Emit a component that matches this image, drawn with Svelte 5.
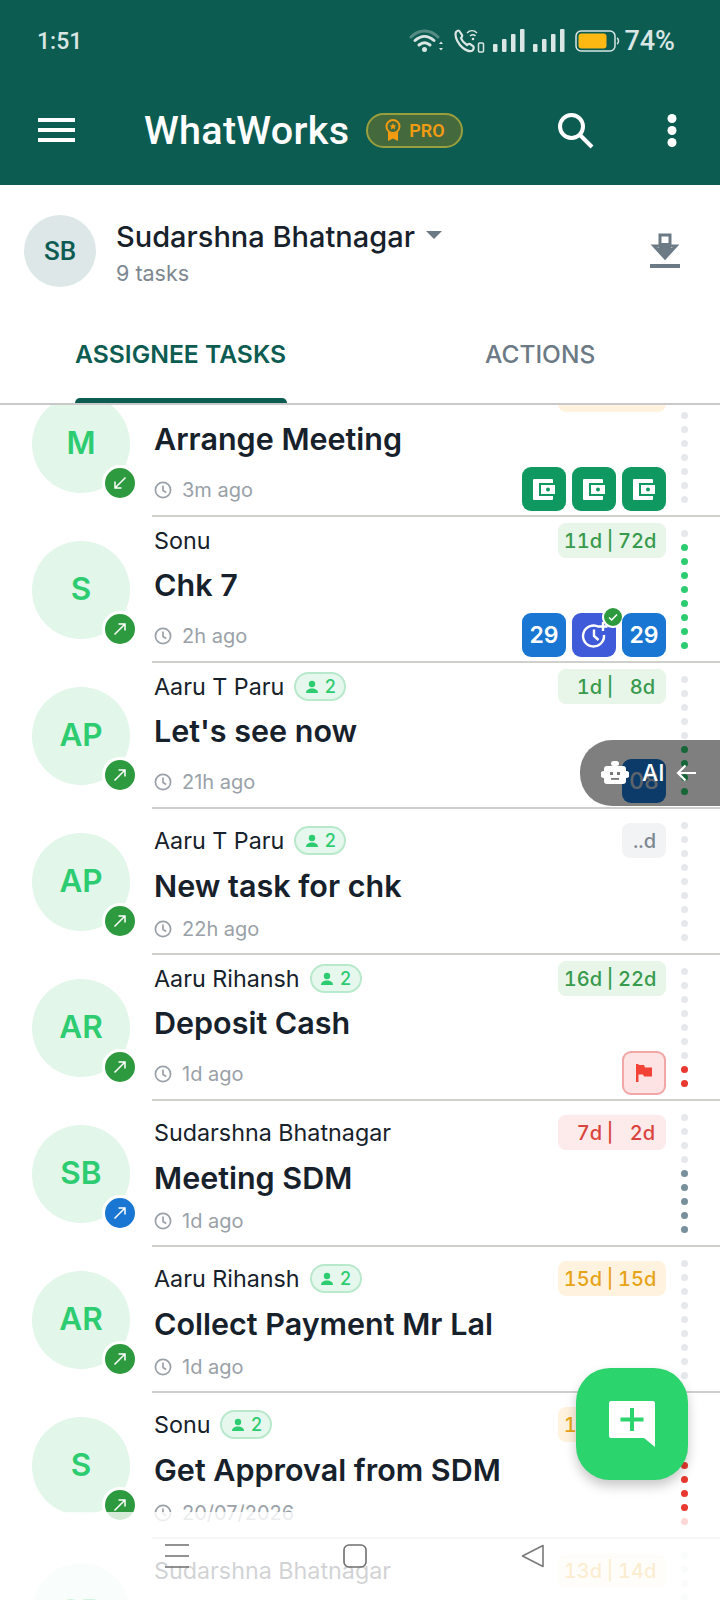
<script>
  const rows = [
    { ini: 'M', name: '', title: 'Arrange Meeting', time: '3m ago', dir: 'in', a: '', b: '', tone: 'orange', badges: ['wallet', 'wallet', 'wallet'], dots: [0, 0, ''] },
    { ini: 'S', name: 'Sonu', title: 'Chk 7', time: '2h ago', dir: 'out', a: '11d', b: '72d', tone: 'green', badges: ['29', 'alarm', '29'], dots: [1, 9, 'g'] },
    { ini: 'AP', name: 'Aaru T Paru', group: 2, title: "Let's see now", time: '21h ago', dir: 'out', a: '1d', b: '8d', tone: 'green', badges: ['08'], dots: [5, 9, 'g'] },
    { ini: 'AP', name: 'Aaru T Paru', group: 2, title: 'New task for chk', time: '22h ago', dir: 'out', only: '..d', tone: 'grey', badges: [], dots: [0, 0, ''] },
    { ini: 'AR', name: 'Aaru Rihansh', group: 2, title: 'Deposit Cash', time: '1d ago', dir: 'out', a: '16d', b: '22d', tone: 'green', badges: ['flag'], dots: [7, 9, 'r'] },
    { ini: 'SB', name: 'Sudarshna Bhatnagar', title: 'Meeting SDM', time: '1d ago', dir: 'self', a: '7d', b: '2d', tone: 'red', badges: [], dots: [4, 9, 's'] },
    { ini: 'AR', name: 'Aaru Rihansh', group: 2, title: 'Collect Payment Mr Lal', time: '1d ago', dir: 'out', a: '15d', b: '15d', tone: 'orange', badges: [], dots: [0, 0, ''] },
    { ini: 'S', name: 'Sonu', group: 2, title: 'Get Approval from SDM', time: '20/07/2026', dir: 'out', a: '14d', b: '15d', tone: 'orange', badges: [], dots: [4, 9, 'r'] },
    { ini: 'SB', name: 'Sudarshna Bhatnagar', title: '', time: '', dir: 'out', a: '13d', b: '14d', tone: 'orange', badges: [], dots: [0, 0, ''] }
  ];
  const nine = [0, 1, 2, 3, 4, 5, 6, 7, 8];
</script>

<div class="screen">
  <header class="top">
    <div class="status">
      <span class="clock">1:51</span>
      <div class="sys">
        <svg class="wifi" width="35" height="24" viewBox="0 0 35 24" fill="none" stroke="#d9e6e3" stroke-width="3" stroke-linecap="round">
          <path d="M2 8C10 0 21 0 29 8" stroke-opacity=".35" />
          <path d="M6 11.500c6-5.500 13-5.500 19 0" />
          <path d="M10 16c4-3.200 7-3.200 11 0" />
          <circle cx="15.500" cy="20.500" r="2.500" fill="#d9e6e3" stroke="none" />
          <path d="M30 15l2-2.500 2 2.500zM30 19l2 2.500 2-2.500z" fill="#d9e6e3" stroke="none" />
        </svg>
        <svg class="call" width="32" height="26" viewBox="0 0 32 26" fill="none">
          <path d="M3 4c2-2 3-2 4 0l2 3c.5 1 0 2-1 3 1 3 3 5 6 7 1-1 2-1.500 3-1l3 2c1 1 1 2 0 4-2 2-6 1-10-2S1 9 3 4z" fill="none" stroke="#d9e6e3" stroke-width="2.200" />
          <path d="M14 5c3-3 7-3 10 0M17 8c2-1.500 4-1.500 5.500 0" stroke="#d9e6e3" stroke-width="1.500" />
          <circle cx="20" cy="11" r="1.300" fill="#d9e6e3" />
          <rect x="25.500" y="15" width="5" height="9" rx="1" stroke="#d9e6e3" stroke-width="1.500" />
        </svg>
        {#each [0, 1] as s}
          <svg class="sig" width="32" height="24" viewBox="0 0 32 24" fill="#d9e6e3">
            <rect x="0" y="15" width="4.500" height="8" rx="1" />
            <rect x="9" y="10" width="4.500" height="13" rx="1" />
            <rect x="18" y="5" width="4.500" height="18" rx="1" />
            <rect x="27" y="0" width="4.500" height="23" rx="1" />
          </svg>
        {/each}
        <svg class="batt" width="45" height="22" viewBox="0 0 45 22" fill="none">
          <rect x="1" y="1" width="39" height="20" rx="5" stroke="#d9e6e3" stroke-width="1.500" />
          <rect x="3.500" y="3.500" width="28" height="15" rx="3" fill="#fdb813" />
          <path d="M42 8c2 1 2 5 0 6" stroke="#d9e6e3" stroke-width="1.500" />
        </svg>
        <span class="pct">74%</span>
      </div>
    </div>
    <div class="bar">
      <svg class="burger" width="37" height="24" viewBox="0 0 37 24" fill="#fff">
        <rect y="0" width="37" height="4" /><rect y="10" width="37" height="4" /><rect y="20" width="37" height="4" />
      </svg>
      <span class="brand">WhatWorks</span>
      <span class="pro">
        <svg width="18" height="24" viewBox="0 0 18 24" fill="none">
          <circle cx="9" cy="8.500" r="6.500" stroke="#f39c12" stroke-width="2" />
          <path d="M9 5l1 2.300 2.400.2-1.800 1.600.6 2.400L9 10.200l-2.200 1.300.6-2.400-1.800-1.600L8 7.300z" fill="#f39c12" />
          <path d="M4 14v9l5-2.500 5 2.500v-9l-5 2z" fill="#f39c12" />
        </svg>
        PRO
      </span>
      <svg class="search" width="37" height="37" viewBox="0 0 37 37" fill="none" stroke="#fff" stroke-width="4">
        <circle cx="14.500" cy="14.500" r="11.500" /><path d="M23 23l12 12" />
      </svg>
      <svg class="more" width="10" height="33" viewBox="0 0 10 33" fill="#fff">
        <circle cx="5" cy="4.500" r="4.500" /><circle cx="5" cy="16.500" r="4.500" /><circle cx="5" cy="28.500" r="4.500" />
      </svg>
    </div>
  </header>

  <section class="who">
    <div class="who-av">SB</div>
    <div class="who-text">
      <div class="who-name">Sudarshna Bhatnagar <i class="caret"></i></div>
      <div class="who-sub">9 tasks</div>
    </div>
    <svg class="dl" width="30" height="36" viewBox="0 0 30 36" fill="none">
      <path d="M10 2h10v11h6L15 25 4 13h6z" stroke="#6c7a85" stroke-width="3" fill="#fff" />
      <path d="M9 10h12v5h3l-9 9-9-9h3z" fill="#6c7a85" />
      <rect y="31" width="30" height="4" fill="#6c7a85" />
    </svg>
  </section>

  <nav class="tabs">
    <div class="tab on">ASSIGNEE TASKS</div>
    <div class="tab off">ACTIONS</div>
  </nav>

  <main class="list">
    <div class="scroll">
      {#each rows as r}
        <article class="row">
          <div class="av-col">
            <div class="av">
              {r.ini}
              <span class="dir" class:self={r.dir === 'self'}>
                <svg width="18" height="18" viewBox="0 0 18 18" fill="none" stroke="#fff" stroke-width="1.500">
                  {#if r.dir === 'in'}
                    <path d="M14.500 3.500L4 14M4 7.500V14h6.500" />
                  {:else}
                    <path d="M3.500 14.500L14 4M7.500 4H14v6.500" />
                  {/if}
                </svg>
              </span>
            </div>
          </div>
          <div class="body">
            <div class="main" class:tall={r.badges.length > 0}>
              <div class="head">
                <span class="person">{r.name}</span>
                {#if r.group}
                  <span class="chip">
                    <svg width="14" height="14" viewBox="0 0 14 14" fill="#2ecc71">
                      <circle cx="7" cy="4" r="3.200" /><path d="M1 13c0-3 2.500-4.500 6-4.500s6 1.500 6 4.500z" />
                    </svg>
                    {r.group}
                  </span>
                {/if}
                <span class="due {r.tone}" class:short={r.only}>
                  {#if r.only}
                    {r.only}
                  {:else if r.a}
                    <span class="d1">{r.a}</span><span class="pipe">|</span><span class="d2">{r.b}</span>
                  {/if}
                </span>
              </div>
              <div class="title">{r.title}</div>
              <div class="foot">
                {#if r.time}
                  <span class="time">
                    <svg width="18" height="18" viewBox="0 0 18 18" fill="none" stroke="#9aa1a8" stroke-width="1.700">
                      <circle cx="9" cy="9" r="7.600" /><path d="M9 4.500V9.500l3.200 2" />
                    </svg>
                    {r.time}
                  </span>
                {/if}
                {#if r.badges.length}
                  <div class="badges">
                    {#each r.badges as b}
                      {#if b === 'wallet'}
                        <span class="bd wallet">
                          <svg width="44" height="44" viewBox="0 0 44 44">
                            <rect x="11" y="12" width="20" height="21" rx="1" fill="#fff" />
                            <rect x="17" y="16" width="16" height="13" fill="#0f9860" />
                            <rect x="19" y="18" width="14" height="9" fill="#fff" />
                            <circle cx="26" cy="22.500" r="2" fill="#0f9860" />
                          </svg>
                        </span>
                      {:else if b === 'alarm'}
                        <span class="bd alarm">
                          <svg width="44" height="44" viewBox="0 0 44 44" fill="none" stroke="#fff" stroke-width="2.400">
                            <path d="M27 14a10.500 10.500 0 1 0 5 8" />
                            <path d="M22 16.500v6.500l4.500 4" />
                            <path d="M31 9v9M26.500 13.500h9" />
                          </svg>
                          <span class="tick">
                            <svg width="12" height="12" viewBox="0 0 12 12" fill="none" stroke="#fff" stroke-width="1.500"><path d="M2 6.500l2.700 2.500L10 3.500" /></svg>
                          </span>
                        </span>
                      {:else if b === 'flag'}
                        <span class="bd flag">
                          <svg width="18" height="18" viewBox="0 0 18 18" fill="#f44336">
                            <path d="M1 0h2.500v18H1z" /><path d="M3 1h6l1 2.500h7v9H9l-1-2H3z" />
                          </svg>
                        </span>
                      {:else}
                        <span class="bd num" class:n29={b === '29'}>{b}</span>
                      {/if}
                    {/each}
                  </div>
                {/if}
              </div>
            </div>
            <div class="dots">
              {#each nine as i}
                <i class="dot {i >= r.dots[0] && i < r.dots[1] ? r.dots[2] : ''}"></i>
              {/each}
            </div>
          </div>
        </article>
      {/each}
    </div>
  </main>

  <div class="ai">
    <svg width="28" height="24" viewBox="0 0 28 24" fill="#fff">
      <rect x="10" y="0" width="8" height="5" rx="2.500" />
      <path d="M6 5h16a3 3 0 0 1 3 3v2h0a3.500 3.500 0 0 1 0 7v3a3 3 0 0 1-3 3H6a3 3 0 0 1-3-3v-3a3.500 3.500 0 0 1 0-7V8a3 3 0 0 1 3-3z" />
      <rect x="9" y="11" width="3" height="3" fill="#777" /><rect x="16" y="11" width="3" height="3" fill="#777" /><rect x="10" y="17" width="8" height="1.800" fill="#777" />
    </svg>
    <span>AI</span>
    <svg class="ai-arrow" width="20" height="20" viewBox="0 0 20 20" fill="none" stroke="#fff" stroke-width="2.200">
      <path d="M20 10H2M9.500 2.500L2 10l7.500 7.500" />
    </svg>
  </div>

  <div class="fab">
    <svg width="46" height="46" viewBox="0 0 46 46">
      <path d="M2 0h42a2 2 0 0 1 2 2v44L35 37H2a2 2 0 0 1-2-2V2a2 2 0 0 1 2-2z" fill="#fff" />
      <path d="M21 7h4v9.500h9.500v4H25V30h-4v-9.500h-9.500v-4H21z" fill="#2bd46c" />
    </svg>
  </div>

  <div class="sysnav">
    <svg width="24" height="24" viewBox="0 0 24 24" fill="none" stroke="#6f6f6f" stroke-width="1.600"><path d="M0 1h24M0 12h24M0 23h24" /></svg>
    <svg width="24" height="24" viewBox="0 0 24 24" fill="none" stroke="#6f6f6f" stroke-width="1.600"><rect x="1" y="1" width="22" height="22" rx="5" /></svg>
    <svg width="24" height="24" viewBox="0 0 24 24" fill="none" stroke="#7a7a7a" stroke-width="1.600" stroke-linejoin="round"><path d="M22 1.500L1.500 12 22 22.500z" /></svg>
  </div>
</div>

<style>
  :global(body) { margin: 0; background: #fff; }
  .screen {
    position: relative;
    width: 720px;
    height: 1600px;
    overflow: hidden;
    display: flex;
    flex-direction: column;
    font-family: Inter, "Liberation Sans", sans-serif;
    color: #17212b;
    background: #fff;
  }
  .top { height: 185px; background: #0d5c52; flex: none; }
  .status {
    height: 82px;
    display: flex;
    align-items: center;
    justify-content: space-between;
    padding: 0 45px 0 37px;
  }
  .clock, .pct { font-family: Roboto, sans-serif; font-weight: 500; font-size: 23px; color: #d9e6e3; }
  .pct { font-size: 27px; }
  .sys { display: flex; align-items: center; }
  .wifi { margin-right: 9px; }
  .call { margin-right: 8px; }
  .sig { margin-right: 8px; }
  .batt { margin-left: 2px; margin-right: 4px; }
  .bar { display: flex; align-items: center; height: 96px; padding-left: 38px; }
  .brand { font-family: Roboto, sans-serif; font-weight: 500; font-size: 39.5px; color: #fff; margin-left: 69px; width: 222px; letter-spacing: .3px; }
  .pro {
    box-sizing: border-box;
    width: 97px;
    height: 35px;
    border: 2px solid #9a9f3e;
    border-radius: 18px;
    background: #43693d;
    color: #f39c12;
    font: 600 18px Roboto, sans-serif;
    display: flex;
    align-items: center;
    justify-content: center;
    gap: 7px;
  }
  .search { margin-left: 94px; }
  .more { margin-left: 73px; }

  .who { height: 132px; box-sizing: border-box; display: flex; flex: none; align-items: center; padding: 4px 40px 0 24px; }
  .who-av {
    width: 72px;
    height: 72px;
    margin-top: -4px;
    border-radius: 50%;
    background: #dde7e8;
    color: #0d5c52;
    font-weight: 500;
    font-size: 26px;
    display: flex;
    align-items: center;
    justify-content: center;
    font-family: Roboto, sans-serif;
  }
  .who-text { flex: 1; margin-left: 20px; }
  .who-name { font-weight: 500; font-size: 29px; line-height: 36px; display: flex; align-items: center; gap: 4px; white-space: nowrap; }
  .caret { border: 8px solid transparent; border-top: 8px solid #6c7a85; border-bottom: 0; width: 0; height: 0; margin-left: 7px; margin-top: -3px; }
  .who-sub { font-size: 21.500px; color: #7d878f; line-height: 30px; margin-top: 3px; }
  .dl { margin-top: -4px; }

  .tabs { height: 88px; flex: none; display: flex; box-sizing: border-box; border-bottom: 2px solid #c9c9c9; }
  .tab { font-weight: 600; font-size: 24.700px; line-height: 74px; height: 86px; box-sizing: border-box; white-space: nowrap; }
  .on { position: relative; margin-left: 75px; width: 212px; color: #0d5c52; }
  .on::after { content: ''; position: absolute; left: 0; right: 0; bottom: 0; height: 5px; background: #0d5c52; border-radius: 5px 5px 0 0; }
  .off { margin-left: 198px; color: #6c7a85; font-weight: 500; font-size: 24.500px; }

  .list { flex: 1; overflow: hidden; }
  .scroll { margin-top: -34px; }
  .row { display: flex; height: 146px; }
  .av-col { width: 152px; flex: none; padding: 24px 0 0 32px; box-sizing: border-box; }
  .av {
    position: relative;
    width: 98px;
    height: 98px;
    box-sizing: border-box;
    padding-bottom: 4px;
    border-radius: 50%;
    background: #e2f6ea;
    color: #2ecc71;
    font-size: 31.500px;
    font-weight: 600;
    display: flex;
    align-items: center;
    justify-content: center;
  }
  .dir {
    position: absolute;
    right: -8px;
    bottom: -8px;
    width: 30px;
    height: 30px;
    border: 3px solid #fff;
    border-radius: 50%;
    background: #2e9a3f;
    display: flex;
    align-items: center;
    justify-content: center;
  }
  .dir.self { background: #1976d2; }
  .body { flex: 1; display: flex; box-sizing: border-box; border-bottom: 2px solid #cfcfcb; }
  .main { width: 514px; box-sizing: border-box; padding: 14px 0 0 2px; flex: none; }
  .main.tall { padding-top: 6px; }
  .head { height: 35px; display: flex; align-items: center; }
  .person { font-size: 23.300px; white-space: nowrap; }
  .chip {
    box-sizing: border-box;
    height: 29px;
    width: 52px;
    margin-left: 10px;
    border: 2px solid #b9e9cc;
    border-radius: 15px;
    background: #e6f7ed;
    color: #2ecc71;
    font-size: 18px;
    font-weight: 500;
    display: flex;
    align-items: center;
    justify-content: center;
    gap: 6px;
  }
  .due {
    box-sizing: border-box;
    margin-left: auto;
    width: 108px;
    height: 35px;
    border-radius: 8px;
    font-size: 20px;
    font-weight: 500;
    font-variant-numeric: tabular-nums;
    display: flex;
    align-items: center;
    padding-right: 11px;
    justify-content: flex-end;
  }
  .due.short { width: 44px; padding-right: 10px; }
  .d1 { width: 40px; text-align: right; }
  .pipe { width: 16px; text-align: center; font-weight: 500; font-size: 19px; }
  .d2 { width: 37px; text-align: right; }
  .green { background: #e8f5e9; color: #379a4c; }
  .orange { background: #fff3e0; color: #e8a317; }
  .red { background: #fdeaea; color: #d9443c; }
  .grey { background: #f1f3f5; color: #7d878f; }
  .title { height: 56px; line-height: 56px; font-size: 30.500px; font-weight: 600; white-space: nowrap; }
  .tall .title { height: 54px; line-height: 54px; }
  .foot { display: flex; align-items: center; justify-content: space-between; height: 28px; }
  .tall .foot { height: 45px; }
  .time { display: flex; align-items: center; gap: 10px; padding-top: 2px; color: #9aa1a8; font-size: 20px; }
  .badges { display: flex; gap: 6px; margin-left: auto; }
  .bd { position: relative; box-sizing: border-box; width: 44px; height: 44px; border-radius: 9px; display: flex; align-items: center; justify-content: center; }
  .wallet { background: #0f9860; }
  .alarm { background: #3f5bd9; }
  .num { background: #1976d2; color: #fff; font-weight: 600; font-size: 23px; }
  .num:not(.n29) { font-weight: 500; color: #bcc8d6; }
  .flag { background: #fde3e3; border: 2px solid #f3a6a6; }
  .tick {
    position: absolute;
    top: -7px;
    right: -8px;
    width: 18px;
    height: 18px;
    box-sizing: content-box;
    background: #2e9a3f;
    border: 2px solid #fff;
    border-radius: 50%;
    display: flex;
    align-items: center;
    justify-content: center;
  }
  .dots { display: flex; flex-direction: column; gap: 7px; padding: 12.500px 0 0 15px; }
  .dot { width: 7px; height: 7px; border-radius: 50%; background: #e6e8eb; display: block; }
  .dot.g { background: #2ecc71; }
  .dot.r { background: #e8382f; }
  .dot.s { background: #78909c; }

  .ai {
    position: absolute;
    left: 580px;
    top: 740px;
    width: 140px;
    height: 66px;
    box-sizing: border-box;
    padding-left: 21px;
    border-radius: 32px 0 0 32px;
    background: rgba(0, 0, 0, .5);
    color: #fff;
    font-size: 23px;
    font-weight: 500;
    display: flex;
    align-items: center;
    gap: 13px;
  }
  .ai-arrow { margin-left: -2px; }
  .fab {
    position: absolute;
    left: 576px;
    top: 1368px;
    width: 112px;
    height: 112px;
    border-radius: 34px;
    background: #2bd46c;
    box-shadow: 0 6px 12px rgba(0, 0, 0, .22);
    display: flex;
    align-items: center;
    justify-content: center;
  }
  .sysnav {
    position: absolute;
    left: 0;
    right: 0;
    bottom: 0;
    height: 88px;
    box-sizing: border-box;
    background: rgba(255, 255, 255, .8);
    display: flex;
    padding: 32px 175px 0 165px;
    justify-content: space-between;
    align-items: flex-start;
  }
</style>
